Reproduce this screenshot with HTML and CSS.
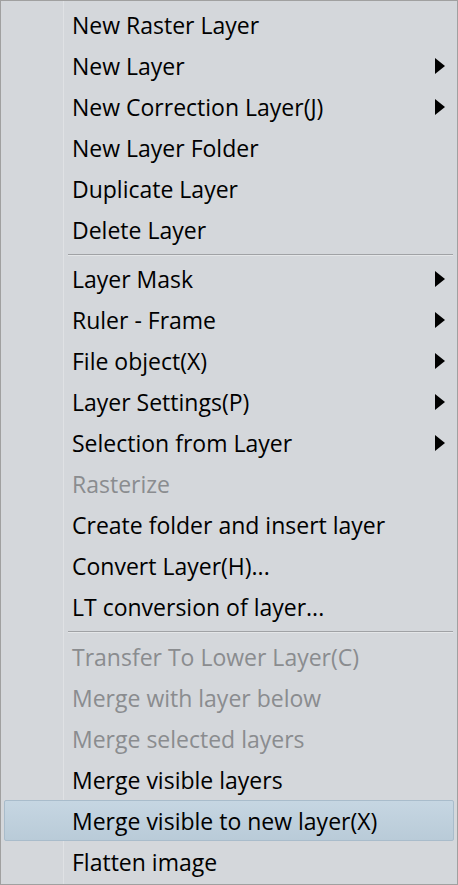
FILE: index.html
```html
<!DOCTYPE html>
<html>
<head>
<meta charset="utf-8">
<link rel="stylesheet" href="styles.css">
</head>
<body>
<div class="menu">
  <div class="group">
    <div class="item"><span class="label">New Raster Layer</span></div>
    <div class="item sub"><span class="label">New Layer</span><span class="arrow"></span></div>
    <div class="item sub"><span class="label">New Correction Layer(J)</span><span class="arrow"></span></div>
    <div class="item"><span class="label">New Layer Folder</span></div>
    <div class="item"><span class="label">Duplicate Layer</span></div>
    <div class="item"><span class="label">Delete Layer</span></div>
  </div>
  <div class="sep"></div>
  <div class="group">
    <div class="item sub"><span class="label">Layer Mask</span><span class="arrow"></span></div>
    <div class="item sub"><span class="label">Ruler - Frame</span><span class="arrow"></span></div>
    <div class="item sub"><span class="label">File object(X)</span><span class="arrow"></span></div>
    <div class="item sub"><span class="label">Layer Settings(P)</span><span class="arrow"></span></div>
    <div class="item sub"><span class="label">Selection from Layer</span><span class="arrow"></span></div>
    <div class="item disabled"><span class="label">Rasterize</span></div>
    <div class="item"><span class="label">Create folder and insert layer</span></div>
    <div class="item"><span class="label">Convert Layer(H)...</span></div>
    <div class="item"><span class="label">LT conversion of layer...</span></div>
  </div>
  <div class="sep sep2"></div>
  <div class="group">
    <div class="item disabled"><span class="label">Transfer To Lower Layer(C)</span></div>
    <div class="item disabled"><span class="label">Merge with layer below</span></div>
    <div class="item disabled"><span class="label">Merge selected layers</span></div>
    <div class="item"><span class="label">Merge visible layers</span></div>
    <div class="item active"><span class="label">Merge visible to new layer(X)</span></div>
    <div class="item"><span class="label">Flatten image</span></div>
  </div>
</div>
</body>
</html>
```
FILE: styles.css
```css
html, body {
  margin: 0;
  padding: 0;
  background: #d4d7db;
}
.menu {
  box-sizing: border-box;
  width: 458px;
  height: 885px;
  border: 1px solid #a0a0a0;
  background: #d4d7db;
  padding: 3px 3px 0 3px;
  font-family: "Open Sans", "Noto Sans", sans-serif;
  font-size: 23px;
  color: #000;
  position: relative;
  overflow: hidden;
}
.menu::before {
  content: "";
  position: absolute;
  left: 62px;
  top: 0;
  bottom: 0;
  width: 1px;
  background: #dfe1e4;
}
.group {
  display: flex;
  flex-direction: column;
}
.item {
  box-sizing: border-box;
  height: 41px;
  display: flex;
  align-items: center;
  padding-left: 67px;
  padding-right: 8px;
  padding-top: 1px;
  border: 1px solid transparent;
  border-radius: 2px;
  position: relative;
}
.label {
  flex: 1;
  white-space: nowrap;
}
.item.disabled {
  color: #8a8c8f;
}
.item.active {
  background: linear-gradient(#c6d6e2, #b9cbd8);
  border-color: #a9bccb;
}
.arrow {
  width: 0;
  height: 0;
  border-top: 8px solid transparent;
  border-bottom: 8px solid transparent;
  border-left: 10px solid #000;
}
.sep {
  height: 8px;
  margin-left: 64px;
  margin-right: 1px;
  display: flex;
  align-items: center;
}
.sep2 {
  height: 9px;
}
.sep::after {
  content: "";
  display: block;
  width: 100%;
  height: 1px;
  background: #a0a2a5;
  box-shadow: 0 1px 0 #e4e6e8;
}
```
